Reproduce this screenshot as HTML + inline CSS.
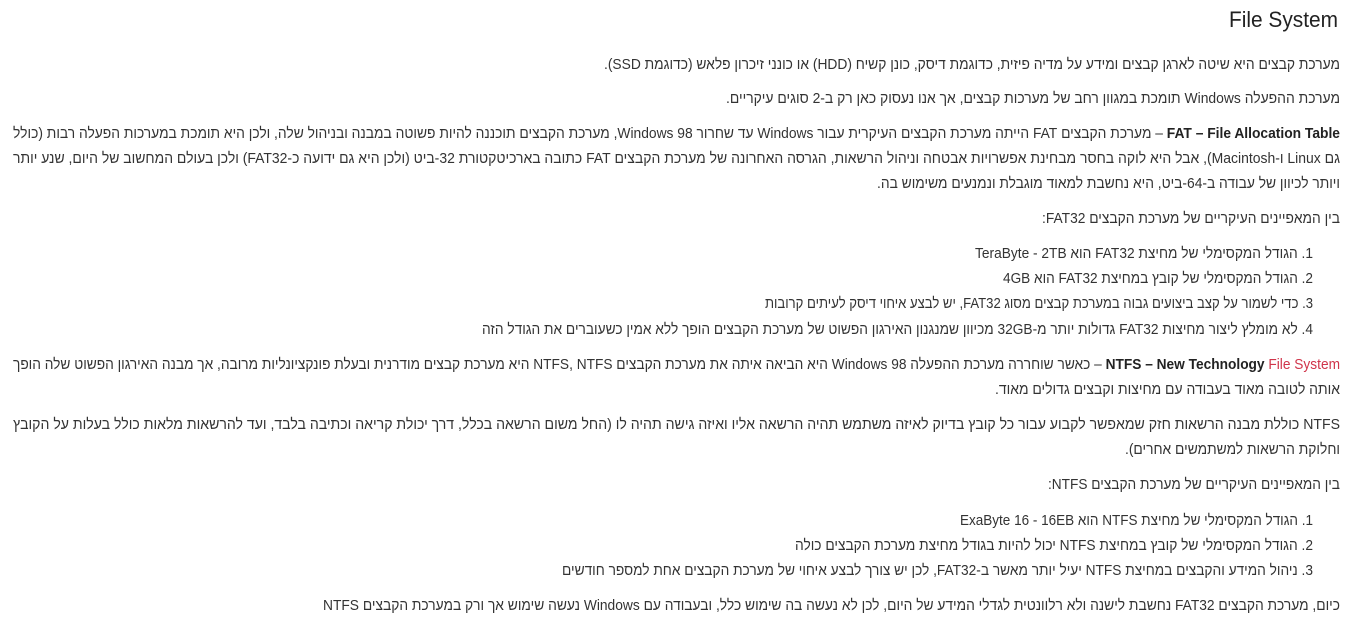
<!DOCTYPE html>
<html><head><meta charset="utf-8"><style>
html,body{margin:0;padding:0;background:#fff;width:1368px;height:624px;overflow:hidden}
svg{display:block}
text{font-family:"Liberation Sans","DejaVu Sans",sans-serif;font-size:15px;fill:#333}
.b{font-weight:bold;fill:#222}
.r{fill:#d0344a}
</style></head><body>
<svg width="1368" height="624" xmlns="http://www.w3.org/2000/svg">
<text x="1338" y="27" text-anchor="end" style="font-size:22px;fill:#222" textLength="109" lengthAdjust="spacingAndGlyphs">File System</text>
<g direction="rtl" text-anchor="start">
<text x="1340" y="69" textLength="736" lengthAdjust="spacingAndGlyphs">מערכת קבצים היא שיטה לארגן קבצים ומידע על מדיה פיזית, כדוגמת דיסק, כונן קשיח (HDD) או כונני זיכרון פלאש (כדוגמת SSD).</text>
<text x="1340" y="103" textLength="614" lengthAdjust="spacingAndGlyphs">מערכת ההפעלה Windows תומכת במגוון רחב של מערכות קבצים, אך אנו נעסוק כאן רק ב-2 סוגים עיקריים.</text>
<text x="1340" y="138" textLength="1327" lengthAdjust="spacingAndGlyphs"><tspan class="b">FAT – File Allocation Table</tspan> – מערכת הקבצים FAT הייתה מערכת הקבצים העיקרית עבור Windows עד שחרור Windows 98, מערכת הקבצים תוכננה להיות פשוטה במבנה ובניהול שלה, ולכן היא תומכת במערכות הפעלה רבות (כולל</text>
<text x="1340" y="163" textLength="1327" lengthAdjust="spacingAndGlyphs">גם Linux ו-Macintosh), אבל היא לוקה בחסר מבחינת אפשרויות אבטחה וניהול הרשאות, הגרסה האחרונה של מערכת הקבצים FAT כתובה בארכיטקטורת 32-ביט (ולכן היא גם ידועה כ-FAT32) ולכן בעולם המחשוב של היום, שנע יותר</text>
<text x="1340" y="188" textLength="463" lengthAdjust="spacingAndGlyphs">ויותר לכיוון של עבודה ב-64-ביט, היא נחשבת למאוד מוגבלת ונמנעים משימוש בה.</text>
<text x="1340" y="223" textLength="298" lengthAdjust="spacingAndGlyphs">בין המאפיינים העיקריים של מערכת הקבצים FAT32:</text>
<text x="1313" y="258" textLength="338" lengthAdjust="spacingAndGlyphs">1. הגודל המקסימלי של מחיצת FAT32 הוא TeraByte - 2TB</text>
<text x="1313" y="283" textLength="310" lengthAdjust="spacingAndGlyphs">2. הגודל המקסימלי של קובץ במחיצת FAT32 הוא 4GB</text>
<text x="1313" y="308" textLength="548" lengthAdjust="spacingAndGlyphs">3. כדי לשמור על קצב ביצועים גבוה במערכת קבצים מסוג FAT32, יש לבצע איחוי דיסק לעיתים קרובות</text>
<text x="1313" y="334" textLength="831" lengthAdjust="spacingAndGlyphs">4. לא מומלץ ליצור מחיצות FAT32 גדולות יותר מ-32GB מכיוון שמנגנון האירגון הפשוט של מערכת הקבצים הופך ללא אמין כשעוברים את הגודל הזה</text>
<text x="1340" y="369" textLength="1327" lengthAdjust="spacingAndGlyphs"><tspan class="b">NTFS – New Technology </tspan><tspan class="r">File System</tspan> – כאשר שוחררה מערכת ההפעלה Windows 98 היא הביאה איתה את מערכת הקבצים NTFS, NTFS היא מערכת קבצים מודרנית ובעלת פונקציונליות מרובה, אך מבנה האירגון הפשוט שלה הופך</text>
<text x="1340" y="394" textLength="345" lengthAdjust="spacingAndGlyphs">אותה לטובה מאוד בעבודה עם מחיצות וקבצים גדולים מאוד.</text>
<text x="1340" y="429" textLength="1327" lengthAdjust="spacingAndGlyphs">NTFS כוללת מבנה הרשאות חזק שמאפשר לקבוע עבור כל קובץ בדיוק לאיזה משתמש תהיה הרשאה אליו ואיזה גישה תהיה לו (החל משום הרשאה בכלל, דרך יכולת קריאה וכתיבה בלבד, ועד להרשאות מלאות כולל בעלות על הקובץ</text>
<text x="1340" y="454" textLength="215" lengthAdjust="spacingAndGlyphs">וחלוקת הרשאות למשתמשים אחרים).</text>
<text x="1340" y="489" textLength="292" lengthAdjust="spacingAndGlyphs">בין המאפיינים העיקריים של מערכת הקבצים NTFS:</text>
<text x="1313" y="525" textLength="353" lengthAdjust="spacingAndGlyphs">1. הגודל המקסימלי של מחיצת NTFS הוא ExaByte 16 - 16EB</text>
<text x="1313" y="550" textLength="518" lengthAdjust="spacingAndGlyphs">2. הגודל המקסימלי של קובץ במחיצת NTFS יכול להיות בגודל מחיצת מערכת הקבצים כולה</text>
<text x="1313" y="575" textLength="751" lengthAdjust="spacingAndGlyphs">3. ניהול המידע והקבצים במחיצת NTFS יעיל יותר מאשר ב-FAT32, לכן יש צורך לבצע איחוי של מערכת הקבצים אחת למספר חודשים</text>
<text x="1340" y="610" textLength="1017" lengthAdjust="spacingAndGlyphs">כיום, מערכת הקבצים FAT32 נחשבת לישנה ולא רלוונטית לגדלי המידע של היום, לכן לא נעשה בה שימוש כלל, ובעבודה עם Windows נעשה שימוש אך ורק במערכת הקבצים NTFS</text>
</g>
</svg>
</body></html>
